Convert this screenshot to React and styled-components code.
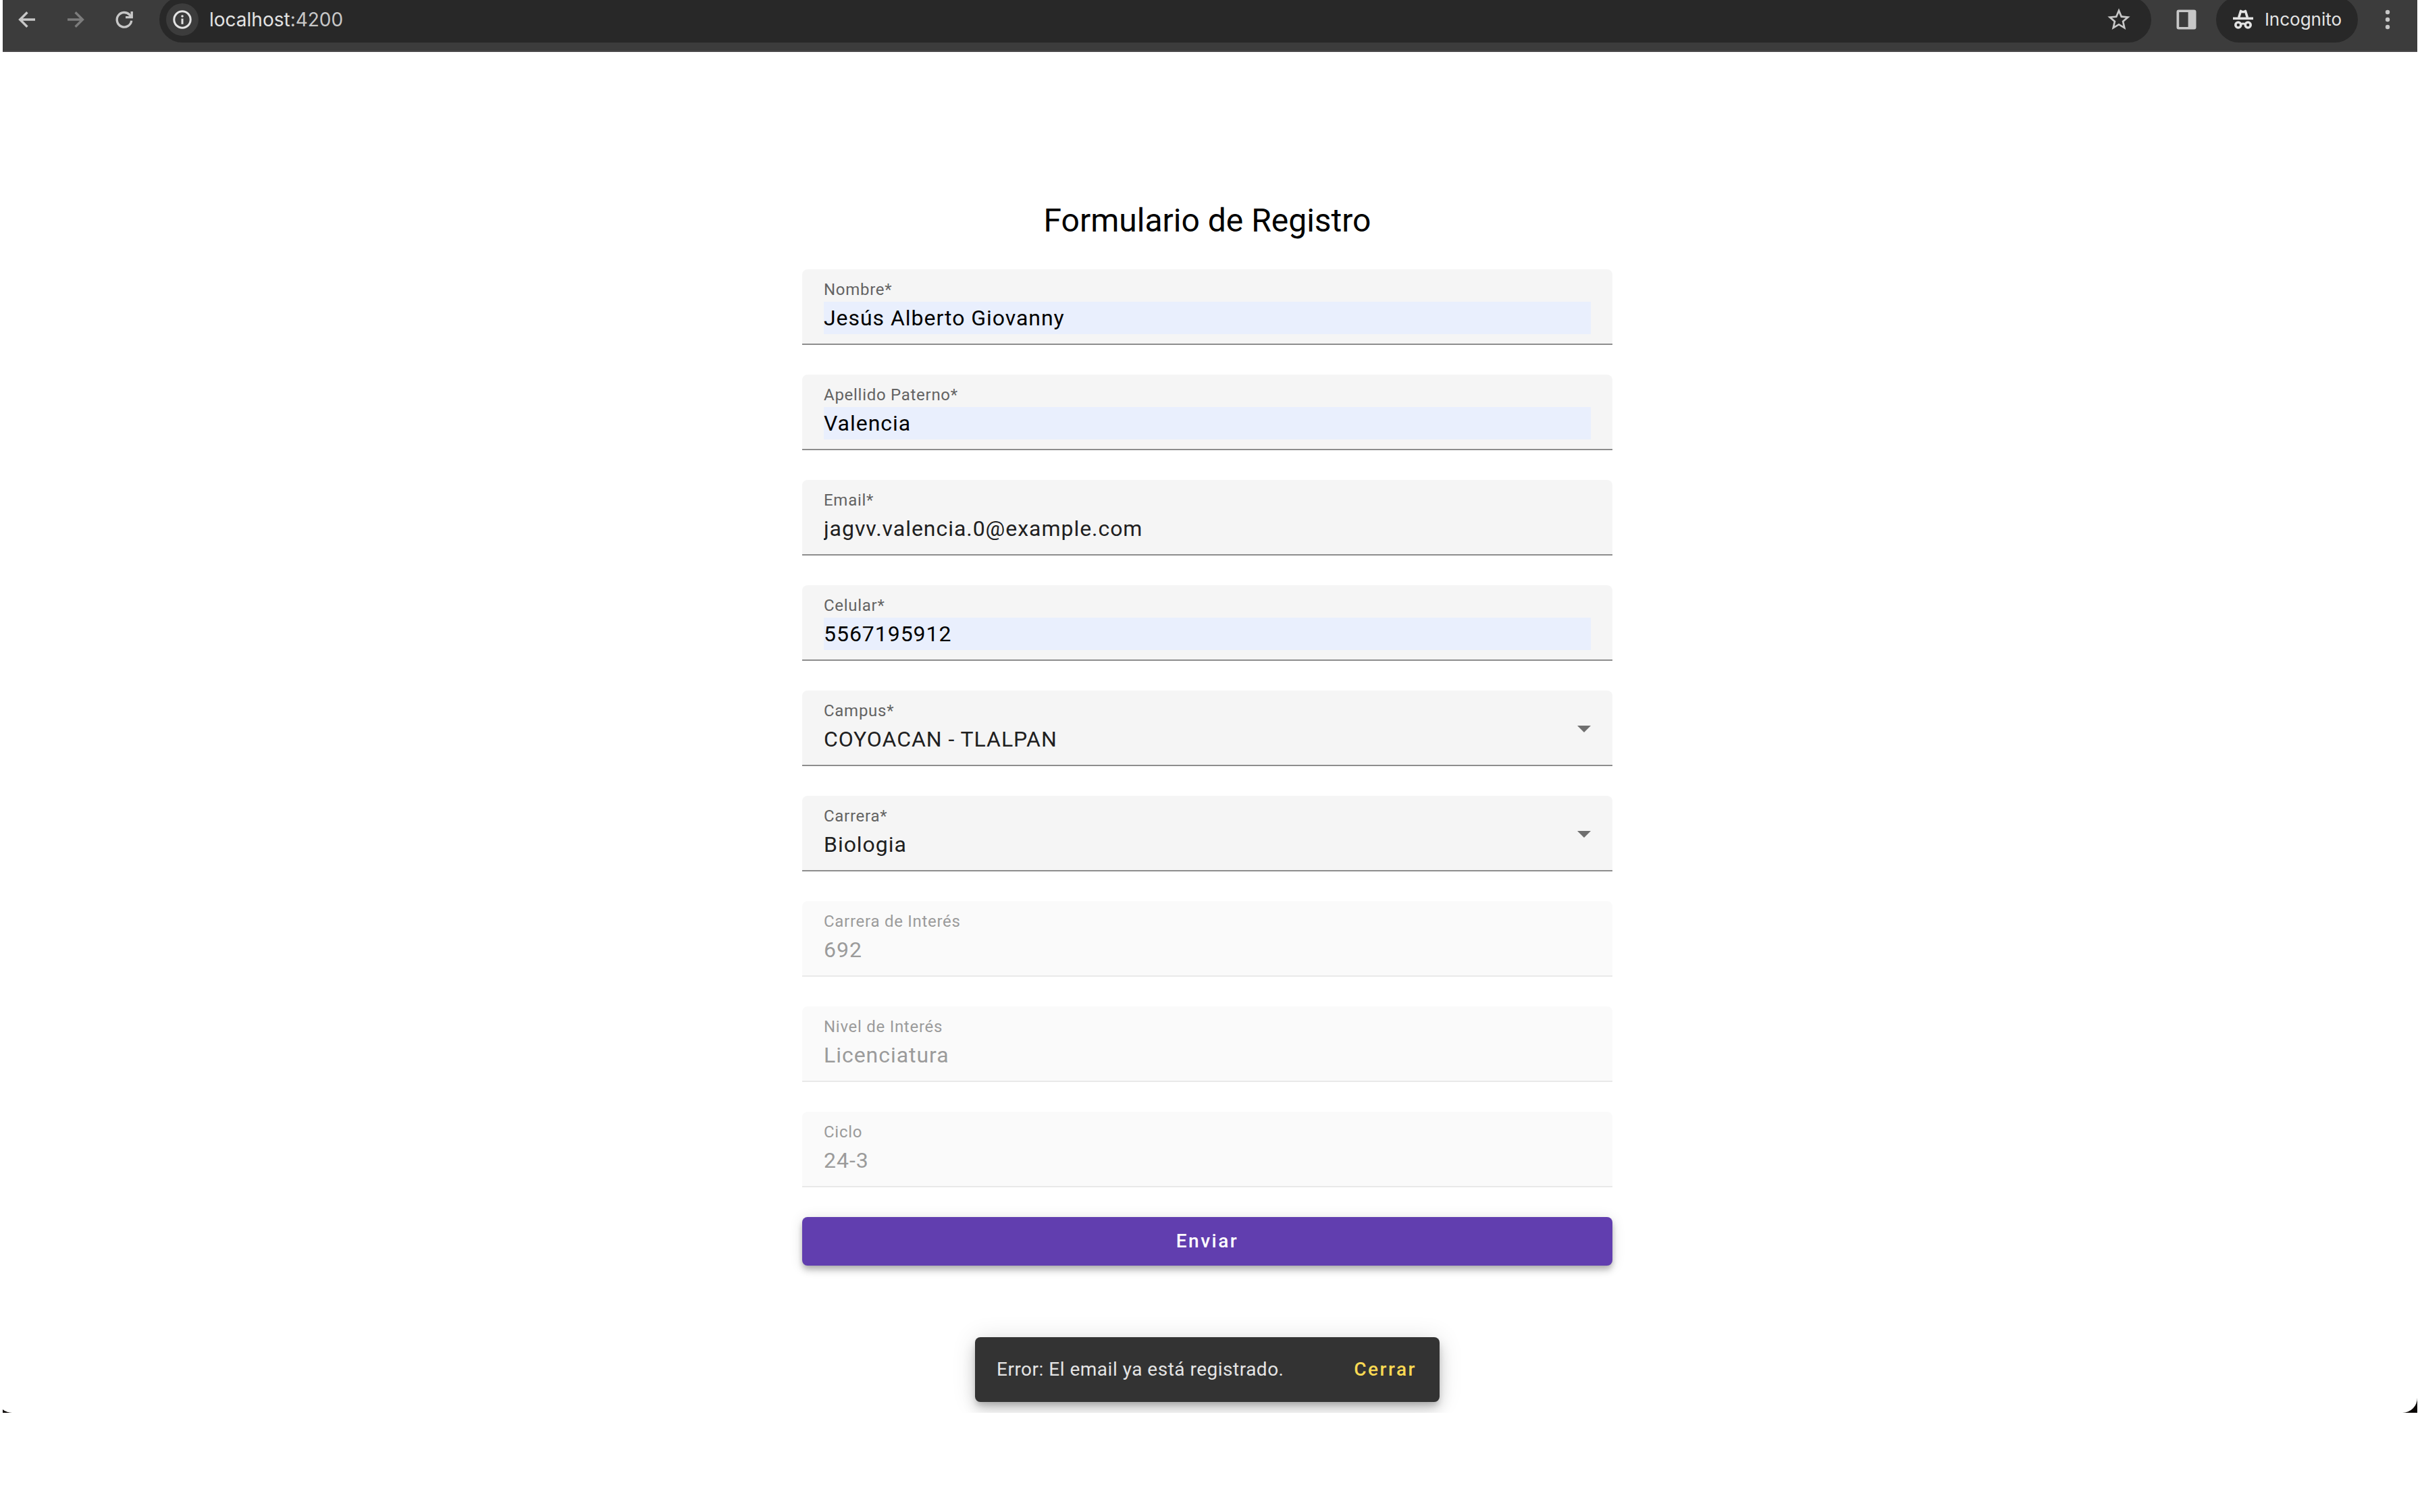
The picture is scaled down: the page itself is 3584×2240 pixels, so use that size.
import React, { useState } from "react";
import styled, { createGlobalStyle, css } from "styled-components";
import { MdStarBorder } from "react-icons/md";

const GlobalStyle = createGlobalStyle`
  *, *::before, *::after { box-sizing: border-box; }
  body {
    margin: 0;
    background: #fff;
    font-family: Roboto, "Liberation Sans", sans-serif;
    -webkit-font-smoothing: antialiased;
  }
  button, input, select { font-family: inherit; margin: 0; }
`;

/* ---------- browser window ---------- */

const Desktop = styled.div`
  margin: 0 4px;
  overflow: hidden;
  background: #0a0604;
`;

const Window = styled.div`
  display: flex;
  flex-direction: column;
  margin-left: -8px;
  overflow: hidden;
  background: #fff;
  border-radius: 0 0 22px 22px;
`;

const Toolbar = styled.header`
  display: flex;
  align-items: center;
  gap: 8px;
  height: 77px;
  padding: 0 8px 17px;
  background: #3c3c3c;
  border-bottom: 2px solid #4a484a;
  font-family: Inter, Roboto, sans-serif;
`;

const NavButtons = styled.nav`
  display: flex;
`;

const IconButton = styled.button`
  display: flex;
  flex: none;
  align-items: center;
  justify-content: center;
  width: 72px;
  height: 56px;
  padding: 0;
  border: 0;
  background: none;
  color: ${(p) => (p.disabled ? "#7c7c7c" : "#c7c7c7")};
`;

const AddressBar = styled.div`
  display: flex;
  flex: 1;
  align-items: center;
  gap: 16px;
  height: 68px;
  margin: 0 8px;
  padding: 0 12px 0 10px;
  border-radius: 34px;
  background: #282828;
`;

const SiteInfo = styled.button`
  display: flex;
  flex: none;
  align-items: center;
  justify-content: center;
  width: 48px;
  height: 48px;
  padding: 0;
  border: 0;
  border-radius: 50%;
  background: #3c3c3c;
  color: #e3e3e3;
`;

const Address = styled.div`
  flex: 1;
  color: #c7c7c7;
  font-size: 28px;
  line-height: 40px;
`;

const Host = styled.span`
  color: #e3e3e3;
`;

const IncognitoChip = styled.button`
  display: flex;
  flex: none;
  align-items: center;
  justify-content: center;
  gap: 16px;
  width: 210px;
  height: 68px;
  padding: 0;
  border: 0;
  border-radius: 34px;
  background: #282828;
  color: #e3e3e3;
  font-size: 26px;
  line-height: 40px;
`;

/* ---------- page ---------- */

const Page = styled.main`
  display: flex;
  flex-direction: column;
  align-items: center;
  padding: 218px 16px 16px;
`;

const Form = styled.form`
  display: flex;
  flex-direction: column;
  gap: 44px;
  width: min(1200px, 100%);
`;

const Title = styled.h1`
  margin: 0 0 40px;
  font-size: 48px;
  font-weight: 400;
  line-height: 64px;
  color: #000;
`;

const FieldBox = styled.div`
  display: flex;
  align-items: center;
  padding: 16px 32px;
  border-radius: 8px 8px 0 0;
  background: linear-gradient(
    to top,
    ${(p) => (p.$muted ? "#e9e9e9" : "#8d8d8d")} 2px,
    ${(p) => (p.$muted ? "#fafafa" : "#f5f5f5")} 2px
  );
`;

const FieldBody = styled.div`
  display: flex;
  flex: 1;
  flex-direction: column;
  gap: 4px;
  min-width: 0;
`;

const Label = styled.label`
  color: ${(p) => (p.$muted ? "#9b9b9b" : "#636363")};
  font-size: 24px;
  line-height: 28px;
  letter-spacing: 0.03em;
`;

const control = css`
  width: 100%;
  height: 48px;
  padding: 0;
  border: 0;
  border-radius: 0;
  outline: 0;
  appearance: none;
  font-size: 32px;
  line-height: 48px;
  letter-spacing: 0.03em;
  background: none;
  color: #202020;
  opacity: 1;
`;

const Input = styled.input`
  ${control}
  ${(p) => p.$autofilled && "background: #e9effd; color: #000;"}
  &:disabled { color: #9b9b9b; }
`;

const Select = styled.select`
  ${control}
`;

const Arrow = styled.svg`
  flex: none;
  width: 20px;
  height: 12px;
  fill: #6f6f6f;
`;

const Submit = styled.button`
  height: 72px;
  padding: 0 32px;
  border: 0;
  border-radius: 8px;
  background: #613eaf;
  color: #fff;
  font-size: 28px;
  font-weight: 500;
  line-height: 40px;
  letter-spacing: 0.09em;
  box-shadow:
    0 4px 8px -2px rgba(0, 0, 0, 0.2),
    0 8px 10px rgba(0, 0, 0, 0.14),
    0 2px 20px rgba(0, 0, 0, 0.12);
`;

const Snackbar = styled.div`
  display: flex;
  align-items: center;
  justify-content: space-between;
  min-width: 688px;
  min-height: 96px;
  margin-top: 106px;
  padding: 0 16px 0 32px;
  border-radius: 8px;
  background: #333;
  color: #e4e4e4;
  font-size: 28px;
  line-height: 40px;
  letter-spacing: 0.0178em;
  box-shadow:
    0 6px 10px -2px rgba(0, 0, 0, 0.2),
    0 12px 20px rgba(0, 0, 0, 0.14),
    0 2px 36px rgba(0, 0, 0, 0.12);
`;

const SnackbarAction = styled.button`
  height: 72px;
  padding: 0 18px;
  border: 0;
  background: none;
  color: #f9d953;
  font-size: 28px;
  font-weight: 500;
  line-height: 40px;
  letter-spacing: 0.09em;
`;

/* ---------- icons ---------- */

const ArrowIcon = ({ flip }) => (
  <svg width="36" height="36" viewBox="0 0 36 36" fill="none" stroke="currentColor" strokeWidth="3.4">
    <path d={flip ? "M6 18H28M17.6 7.2L28.4 18L17.6 28.8" : "M30 18H8M18.4 7.2L7.6 18L18.4 28.8"} />
  </svg>
);

const ReloadIcon = () => (
  <svg width="36" height="36" viewBox="0 0 36 36" fill="none" stroke="currentColor" strokeWidth="3.4">
    <path d="M28.7 19.6A10.8 10.8 0 1 1 26 11L28.4 14" />
    <path d="M29.2 6V14.6H20" />
  </svg>
);

const InfoIcon = () => (
  <svg width="28" height="28" viewBox="0 0 28 28" fill="none" stroke="currentColor" strokeWidth="3">
    <circle cx="14" cy="14" r="12.2" />
    <path d="M14 12.6V20.8" />
    <circle cx="14" cy="9" r="1.8" fill="currentColor" stroke="none" />
  </svg>
);

const SidePanelIcon = () => (
  <svg width="30" height="30" viewBox="0 0 30 30" fill="currentColor">
    <path fillRule="evenodd" d="M3.5 0.5h23a3 3 0 0 1 3 3v23a3 3 0 0 1-3 3h-23a3 3 0 0 1-3-3v-23a3 3 0 0 1 3-3zM4.2 4v22h13.4V4z" />
  </svg>
);

const IncognitoIcon = () => (
  <svg width="32" height="30" viewBox="0 0 32 30" fill="none" stroke="currentColor">
    <path d="M1 13.3H31" strokeWidth="3.6" />
    <path d="M9.6 12L12.6 2.4Q16 5 19.4 2.4L22.4 12" strokeWidth="3.6" strokeLinejoin="round" />
    <circle cx="8.8" cy="23" r="4" strokeWidth="3.6" />
    <circle cx="23.2" cy="23" r="4" strokeWidth="3.6" />
    <path d="M12.4 22.2Q16 20 19.6 22.2" strokeWidth="3" />
  </svg>
);

const MenuIcon = () => (
  <svg width="30" height="30" viewBox="0 0 30 30" fill="currentColor">
    <circle cx="15" cy="4" r="3.2" />
    <circle cx="15" cy="15" r="3.2" />
    <circle cx="15" cy="26" r="3.2" />
  </svg>
);

/* ---------- fields ---------- */

const FIELDS = [
  { id: "nombre", label: "Nombre*", value: "Jesús Alberto Giovanny", autofilled: true },
  { id: "apellido", label: "Apellido Paterno*", value: "Valencia", autofilled: true },
  { id: "email", label: "Email*", value: "jagvv.valencia.0@example.com" },
  { id: "celular", label: "Celular*", value: "5567195912", autofilled: true },
  { id: "campus", label: "Campus*", value: "COYOACAN - TLALPAN", select: true },
  { id: "carrera", label: "Carrera*", value: "Biologia", select: true },
  { id: "interes", label: "Carrera de Interés", value: "692", disabled: true },
  { id: "nivel", label: "Nivel de Interés", value: "Licenciatura", disabled: true },
  { id: "ciclo", label: "Ciclo", value: "24-3", disabled: true },
];

function Field({ id, label, value, autofilled, select, disabled }) {
  const [current, setCurrent] = useState(value);
  const onChange = (e) => setCurrent(e.target.value);
  return (
    <FieldBox $muted={disabled}>
      <FieldBody>
        <Label htmlFor={id} $muted={disabled}>{label}</Label>
        {select ? (
          <Select id={id} value={current} onChange={onChange}>
            <option>{value}</option>
          </Select>
        ) : (
          <Input
            id={id}
            type="text"
            spellCheck={false}
            value={current}
            onChange={onChange}
            disabled={disabled}
            $autofilled={autofilled}
          />
        )}
      </FieldBody>
      {select && (
        <Arrow viewBox="0 0 20 12" aria-hidden="true">
          <path d="M0 2H20L10 12Z" />
        </Arrow>
      )}
    </FieldBox>
  );
}

export default function App() {
  return (
    <>
      <GlobalStyle />
      <Desktop>
        <Window>
          <Toolbar>
            <NavButtons>
              <IconButton type="button" aria-label="Back"><ArrowIcon /></IconButton>
              <IconButton type="button" aria-label="Forward" disabled><ArrowIcon flip /></IconButton>
              <IconButton type="button" aria-label="Reload"><ReloadIcon /></IconButton>
            </NavButtons>
            <AddressBar>
              <SiteInfo type="button" aria-label="Site information"><InfoIcon /></SiteInfo>
              <Address><Host>localhost</Host>:4200</Address>
              <IconButton type="button" aria-label="Bookmark"><MdStarBorder size={40} /></IconButton>
            </AddressBar>
            <IconButton type="button" aria-label="Side panel"><SidePanelIcon /></IconButton>
            <IncognitoChip type="button"><IncognitoIcon />Incognito</IncognitoChip>
            <IconButton type="button" aria-label="Menu"><MenuIcon /></IconButton>
          </Toolbar>
          <Page>
            <Title>Formulario de Registro</Title>
            <Form onSubmit={(e) => e.preventDefault()}>
              {FIELDS.map((field) => (
                <Field key={field.id} {...field} />
              ))}
              <Submit type="submit">Enviar</Submit>
            </Form>
            <Snackbar role="status">
              <span>Error: El email ya está registrado.</span>
              <SnackbarAction type="button">Cerrar</SnackbarAction>
            </Snackbar>
          </Page>
        </Window>
      </Desktop>
    </>
  );
}
